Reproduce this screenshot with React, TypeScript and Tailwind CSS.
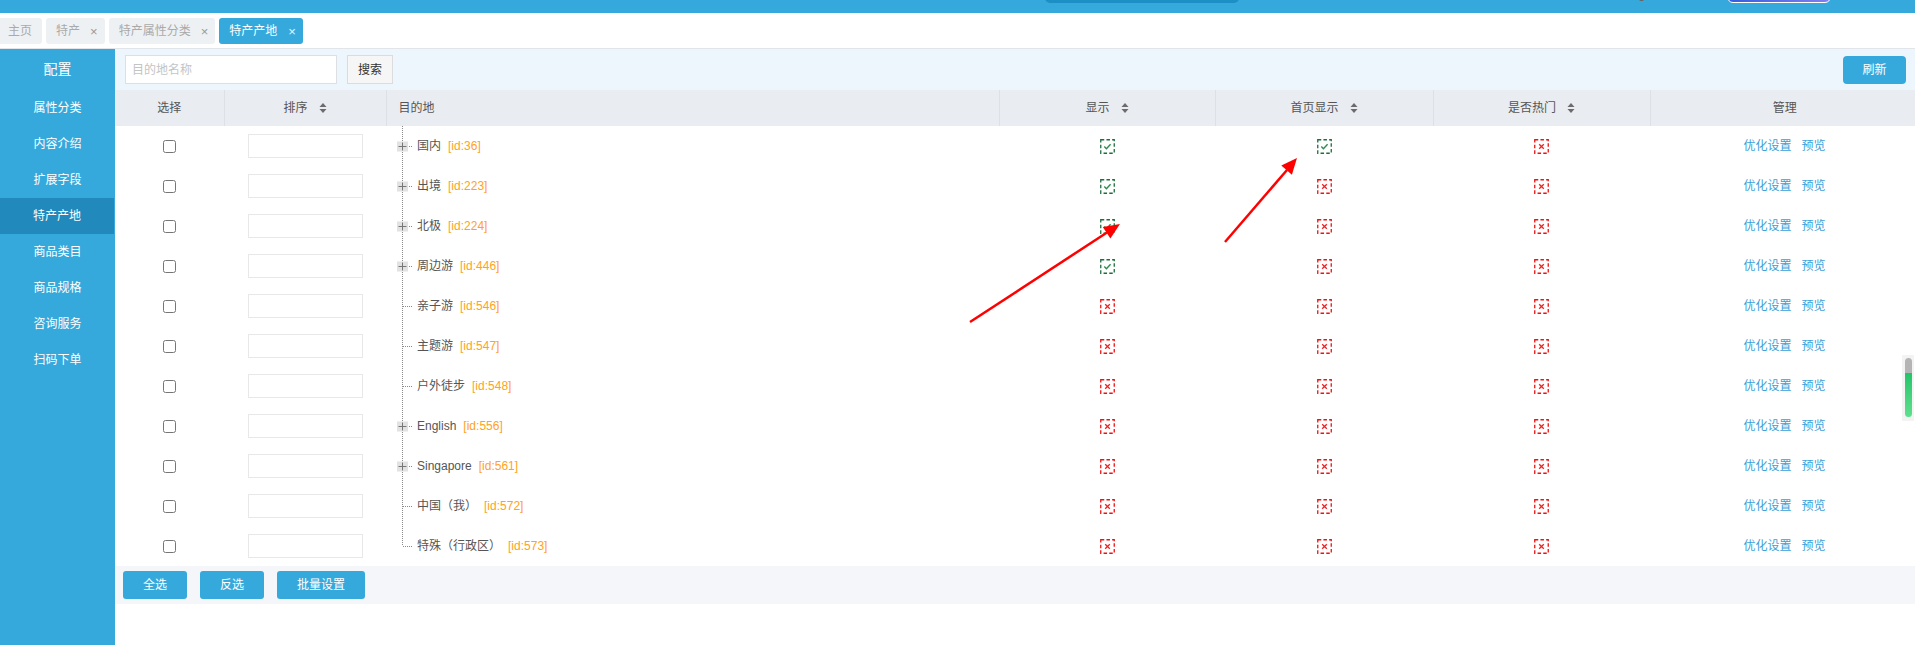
import React from "react";

const tabs = [
  { name: "主页", close: false },
  { name: "特产", close: true },
  { name: "特产属性分类", close: true },
];

const menus = ["属性分类", "内容介绍", "扩展字段", "特产产地", "商品类目", "商品规格", "咨询服务", "扫码下单"];

const rows = [
  { name: "国内", id: 36, plus: true, show: true, home: true, hot: false },
  { name: "出境", id: 223, plus: true, show: true, home: false, hot: false },
  { name: "北极", id: 224, plus: true, show: true, home: false, hot: false },
  { name: "周边游", id: 446, plus: true, show: true, home: false, hot: false },
  { name: "亲子游", id: 546, plus: false, show: false, home: false, hot: false },
  { name: "主题游", id: 547, plus: false, show: false, home: false, hot: false },
  { name: "户外徒步", id: 548, plus: false, show: false, home: false, hot: false },
  { name: "English", id: 556, plus: true, show: false, home: false, hot: false },
  { name: "Singapore", id: 561, plus: true, show: false, home: false, hot: false },
  { name: "中国（我）", id: 572, plus: false, show: false, home: false, hot: false },
  { name: "特殊（行政区）", id: 573, plus: false, show: false, home: false, hot: false },
];

function SortIcon() {
  return (
    <svg width="8" height="12" viewBox="0 0 8 12" className="ml-[11px] shrink-0">
      <path d="M4 1 L7.5 5 L0.5 5 Z" fill="#6b6b6b" />
      <path d="M4 11 L7.5 7 L0.5 7 Z" fill="#6b6b6b" />
    </svg>
  );
}

function Status({ ok }: { ok: boolean }) {
  const c = ok ? "#1d6e3c" : "#f01010";
  return (
    <svg width="15" height="15" viewBox="0 0 15 15" className="mx-auto block">
      <rect x="0.75" y="0.75" width="13.5" height="13.5" fill="none" stroke={c} strokeWidth="1.3" strokeDasharray="3.5 2.2" />
      {ok ? (
        <path d="M4.3 7.6 L6.4 9.7 L10.6 5.3" fill="none" stroke="#2f8a4e" strokeWidth="1.4" />
      ) : (
        <path d="M5.2 5.2 L9.8 9.8 M9.8 5.2 L5.2 9.8" fill="none" stroke="#f02020" strokeWidth="1.3" />
      )}
    </svg>
  );
}

function TreeLink({ plus, last }: { plus: boolean; last: boolean }) {
  return (
    <svg width="21" height="40" viewBox="0 0 21 40" className="shrink-0">
      <line x1="6.5" y1="0" x2="6.5" y2={last ? 20 : 40} stroke="#8a8a8a" strokeWidth="1" strokeDasharray="1 1" />
      <line x1="7" y1="20.5" x2="16" y2="20.5" stroke="#8a8a8a" strokeWidth="1" strokeDasharray="1 1" />
      {plus && (
        <g>
          <rect x="1" y="15.5" width="11" height="10" fill="#e2e2e2" />
          <path d="M2.5 20.5 H10.5 M6.5 16.5 V24.5" stroke="#777" strokeWidth="1" />
        </g>
      )}
    </svg>
  );
}

export default function App() {
  return (
    <div className="relative w-[1915px] h-[645px] overflow-hidden bg-white font-['Liberation_Sans','Noto_Sans_CJK_SC',sans-serif] text-[12px] text-[#555]">
      {/* top header, mostly scrolled off */}
      <div className="relative h-[13px] bg-[#36a9dc]">
        <div className="absolute left-[1045px] -top-[10px] w-[194px] h-[13px] rounded-[5px] bg-[#1c8fc5]" />
        <div className="absolute left-[1639px] -top-[3px] w-[5px] h-[4px] rounded-full bg-[#666]" />
        <div className="absolute left-[1727px] -top-[10px] w-[104px] h-[13px] rounded-[6px] border border-white bg-gradient-to-r from-[#2f5de0] to-[#7e7ef0]" />
      </div>

      {/* tabs */}
      <div className="h-[36px] border-b border-[#e1e5ea] flex items-start pt-[5px] gap-[4px] -ml-[2px]">
        {tabs.map((t) => (
          <div key={t.name} className="h-[26px] flex items-center pl-[10px] pr-[7px] rounded-[3px] bg-[#eef1f4] text-[#aaa]">
            <span>{t.name}</span>
            {t.close ? <span className="ml-[10px] text-[#999] text-[13px] leading-none">×</span> : <span className="w-[3px]" />}
          </div>
        ))}
        <div className="h-[26px] flex items-center pl-[10px] pr-[7px] rounded-[3px] bg-[#36a9dc] text-white">
          <span>特产产地</span>
          <span className="ml-[11px] text-[13px] leading-none text-[#e6f3fb]">×</span>
        </div>
      </div>

      <div className="flex h-[596px]">
        {/* sidebar */}
        <div className="w-[115px] shrink-0 bg-[#36a9dc] text-white">
          <div className="h-[41px] flex items-center justify-center text-[14px]">配置</div>
          {menus.map((m) => (
            <div
              key={m}
              className={
                m === "特产产地"
                  ? "h-[36px] flex items-center justify-center bg-[#2289bd] mr-[1px]"
                  : "h-[36px] flex items-center justify-center"
              }
            >
              {m}
            </div>
          ))}
        </div>

        {/* main */}
        <div className="flex-1 flex flex-col">
          <div className="h-[41px] bg-[#eef6fd] flex items-center justify-between pl-[10px] pr-[9px]">
            <div className="flex items-center gap-[10px]">
              <input
                placeholder="目的地名称"
                className="w-[212px] h-[29px] bg-white border border-[#dcdfe3] px-[6px] text-[12px] outline-none placeholder:text-[#c4c4c4]"
              />
              <button className="w-[46px] h-[29px] bg-[#f6f6f6] border border-[#dcdcdc] text-[#333] text-[12px]">搜索</button>
            </div>
            <button className="w-[63px] h-[28px] rounded-[4px] bg-[#36a9dc] text-white text-[12px]">刷新</button>
          </div>

          <table className="table-fixed w-full border-collapse">
            <colgroup>
              <col className="w-[109px]" />
              <col className="w-[162px]" />
              <col className="w-[613px]" />
              <col className="w-[216px]" />
              <col className="w-[218px]" />
              <col className="w-[217px]" />
              <col />
            </colgroup>
            <thead>
              <tr className="h-[36px] bg-[#e9ecf1] text-[#555] font-normal">
                <th className="font-normal border-r border-[#dde1e6]">选择</th>
                <th className="font-normal border-r border-[#dde1e6]">
                  <div className="flex items-center justify-center">排序<SortIcon /></div>
                </th>
                <th className="font-normal text-left pl-[12px] border-r border-[#dde1e6]">目的地</th>
                <th className="font-normal border-r border-[#dde1e6]">
                  <div className="flex items-center justify-center">显示<SortIcon /></div>
                </th>
                <th className="font-normal border-r border-[#dde1e6]">
                  <div className="flex items-center justify-center">首页显示<SortIcon /></div>
                </th>
                <th className="font-normal border-r border-[#dde1e6]">
                  <div className="flex items-center justify-center">是否热门<SortIcon /></div>
                </th>
                <th className="font-normal pl-[4px]">管理</th>
              </tr>
            </thead>
            <tbody>
              {rows.map((r, i) => (
                <tr key={r.id} className="h-[40px]">
                  <td className="p-0 text-center">
                    <input type="checkbox" className="w-[13px] h-[13px] align-middle m-0" />
                  </td>
                  <td className="p-0">
                    <input className="block mx-auto w-[115px] h-[24px] border border-[#e8e8e8] outline-none" />
                  </td>
                  <td className="p-0">
                    <div className="flex items-center h-[40px] pl-[10px]">
                      <TreeLink plus={r.plus} last={i === rows.length - 1} />
                      <span className="text-[#555]">{r.name}</span>
                      <span className="ml-[7px] text-[#ffa21c]">[id:{r.id}]</span>
                    </div>
                  </td>
                  <td className="p-0"><Status ok={r.show} /></td>
                  <td className="p-0"><Status ok={r.home} /></td>
                  <td className="p-0"><Status ok={r.hot} /></td>
                  <td className="p-0">
                    <div className="flex items-center justify-center gap-[10px] pl-[4px] text-[#3a9fd8]">
                      <span>优化设置</span>
                      <span>预览</span>
                    </div>
                  </td>
                </tr>
              ))}
            </tbody>
          </table>

          <div className="h-[38px] bg-[#f4f6f9] flex items-center gap-[13px] pl-[8px]">
            <button className="w-[64px] h-[28px] rounded-[3px] bg-[#36a9dc] text-white text-[12px]">全选</button>
            <button className="w-[64px] h-[28px] rounded-[3px] bg-[#36a9dc] text-white text-[12px]">反选</button>
            <button className="w-[88px] h-[28px] rounded-[3px] bg-[#36a9dc] text-white text-[12px]">批量设置</button>
          </div>
        </div>
      </div>

      {/* scroll indicator */}
      <div className="absolute right-[1px] top-[355px] w-[12px] h-[66px] bg-[#f3f3f3] flex justify-center pt-[3px]">
        <div className="w-[7px] h-[59px] rounded-full overflow-hidden flex flex-col">
          <div className="h-[15px] bg-[#b4b4b4]" />
          <div className="flex-1 bg-gradient-to-b from-[#1fc46a] to-[#5ee08e]" />
        </div>
      </div>

      {/* annotation arrows */}
      <svg className="absolute left-0 top-0 pointer-events-none" width="1915" height="645">
        <line x1="970" y1="322" x2="1107" y2="232.5" stroke="#f00" strokeWidth="2.5" />
        <polygon points="1120,224 1110.4,238.6 1102.8,226.9" fill="#f00" />
        <line x1="1225" y1="242" x2="1287" y2="170" stroke="#f00" strokeWidth="2.5" />
        <polygon points="1297,158 1291.9,174.7 1281.3,165.5" fill="#f00" />
      </svg>
    </div>
  );
}
